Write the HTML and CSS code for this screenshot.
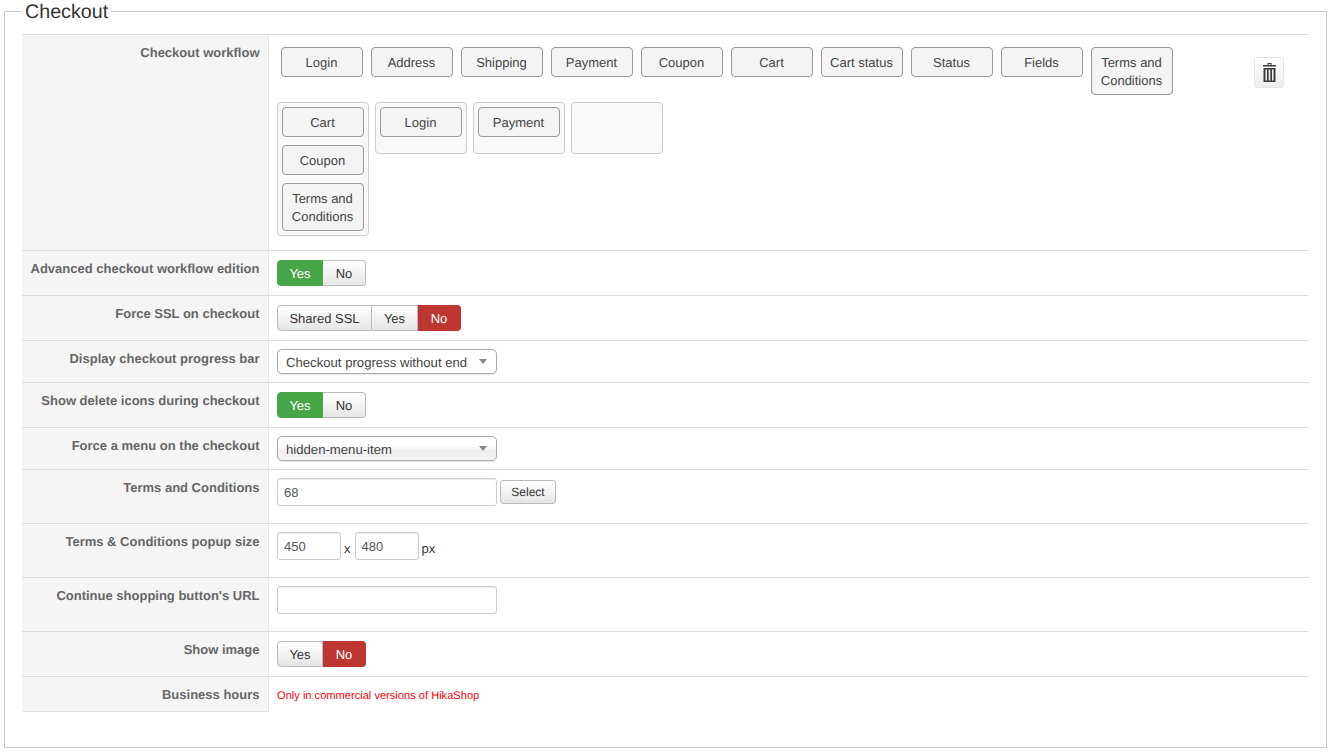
FILE: index.html
```html
<!DOCTYPE html>
<html lang="en">
<head>
<meta charset="utf-8">
<title>Checkout</title>
<link rel="stylesheet" href="styles.css">
</head>
<body>
<fieldset class="panel">
  <legend class="panel-title">Checkout</legend>
  <div class="form">
    <div class="row">
      <div class="label">Checkout workflow</div>
      <div class="cell">
        <div class="palette">
          <div class="chip">Login</div>
          <div class="chip">Address</div>
          <div class="chip">Shipping</div>
          <div class="chip">Payment</div>
          <div class="chip">Coupon</div>
          <div class="chip">Cart</div>
          <div class="chip">Cart status</div>
          <div class="chip">Status</div>
          <div class="chip">Fields</div>
          <div class="chip">Terms and Conditions</div>
          <div class="trash">
            <svg width="13" height="19" viewBox="0 0 13 19" aria-hidden="true">
              <path fill="#3c3c3c" fill-rule="evenodd" d="M4.500 0h4v2h4.500v1.500h-13v-1.500h4.500zM5.500 1v1h2v-1z"/>
              <path fill="#3c3c3c" fill-rule="evenodd" d="M.5 5h12v14h-12zM2.500 6.500v11h1.500v-11zM5.700 6.500v11h1.600v-11zM9 6.500v11h1.500v-11z"/>
            </svg>
          </div>
        </div>
        <div class="zones">
          <div class="zone">
            <div class="chip">Cart</div>
            <div class="chip">Coupon</div>
            <div class="chip">Terms and Conditions</div>
          </div>
          <div class="zone"><div class="chip">Login</div></div>
          <div class="zone"><div class="chip">Payment</div></div>
          <div class="zone"></div>
        </div>
      </div>
    </div>

    <div class="row">
      <div class="label">Advanced checkout workflow edition</div>
      <div class="cell">
        <div class="toggle">
          <span class="opt opt-yes on-green">Yes</span><span class="opt opt-no">No</span>
        </div>
      </div>
    </div>

    <div class="row">
      <div class="label">Force SSL on checkout</div>
      <div class="cell">
        <div class="toggle">
          <span class="opt opt-shared">Shared SSL</span><span class="opt opt-yes">Yes</span><span class="opt opt-no on-red">No</span>
        </div>
      </div>
    </div>

    <div class="row">
      <div class="label">Display checkout progress bar</div>
      <div class="cell">
        <div class="select"><span>Checkout progress without end</span><i class="arrow"></i></div>
      </div>
    </div>

    <div class="row">
      <div class="label">Show delete icons during checkout</div>
      <div class="cell">
        <div class="toggle">
          <span class="opt opt-yes on-green">Yes</span><span class="opt opt-no">No</span>
        </div>
      </div>
    </div>

    <div class="row">
      <div class="label">Force a menu on the checkout</div>
      <div class="cell">
        <div class="select select-shaded"><span>hidden-menu-item</span><i class="arrow"></i></div>
      </div>
    </div>

    <div class="row">
      <div class="label">Terms and Conditions</div>
      <div class="cell">
        <div class="inline">
          <input class="input input-wide" type="text" value="68">
          <span class="btn-select">Select</span>
        </div>
      </div>
    </div>

    <div class="row">
      <div class="label">Terms &amp; Conditions popup size</div>
      <div class="cell">
        <div class="inline">
          <input class="input input-small" type="text" value="450">
          <span class="unit">x</span>
          <input class="input input-small" type="text" value="480">
          <span class="unit">px</span>
        </div>
      </div>
    </div>

    <div class="row">
      <div class="label">Continue shopping button's URL</div>
      <div class="cell">
        <div class="inline">
          <input class="input input-wide" type="text" value="">
        </div>
      </div>
    </div>

    <div class="row">
      <div class="label">Show image</div>
      <div class="cell">
        <div class="toggle">
          <span class="opt opt-yes">Yes</span><span class="opt opt-no on-red">No</span>
        </div>
      </div>
    </div>

    <div class="row row-last">
      <div class="label">Business hours</div>
      <div class="cell"><span class="notice">Only in commercial versions of HikaShop</span></div>
    </div>
  </div>
</fieldset>
</body>
</html>
```

FILE: styles.css
```css
* { box-sizing: border-box; }

body {
  margin: 0 9px 0 4px;
  background: #fff;
  font-family: "Liberation Sans", Arial, sans-serif;
  font-size: 13px;
  line-height: 18px;
  color: #333;
  text-rendering: geometricPrecision;
}

.panel {
  margin: 0;
  min-width: 0;
  border: 1px solid #ccc;
  padding: 12px 17px 35px;
}

.panel-title {
  padding: 2px 3px 0;
  font-size: 19.7px;
  line-height: 20px;
  color: #333;
}

.row {
  display: grid;
  grid-template-columns: 246px 1fr;
  border-top: 1px solid #ddd;
}

.label {
  padding: 9px 8.500px 7px 0;
  background: #f5f5f5;
  text-align: right;
  font-weight: bold;
  color: #666;
}

.row-last .label { border-bottom: 1px solid #e5e5e5; }

.cell {
  border-left: 1px solid #e5e5e5;
  padding: 8px;
}

/* workflow */
.palette {
  display: flex;
  align-items: flex-start;
  gap: 8px;
  margin: 4px 0 7px 4px;
}

.chip {
  width: 82px;
  flex: none;
  padding: 6px 5px 4px 4px;
  border: 1px solid #999;
  border-radius: 4px;
  background: #f4f4f4;
  text-align: center;
  color: #444;
}

.trash {
  display: flex;
  align-items: center;
  justify-content: center;
  width: 30px;
  height: 31px;
  margin: 10px 0 0 73px;
  border: 1px solid #e6e6e6;
  border-radius: 3px;
  background: linear-gradient(#fff, #ececec);
}

.zones {
  display: flex;
  align-items: flex-start;
  gap: 6px;
  margin-bottom: 6px;
}

.zone {
  display: flex;
  flex-direction: column;
  gap: 8px;
  width: 92px;
  min-height: 52px;
  padding: 4px;
  border: 1px solid #ccc;
  border-radius: 4px;
  background: #f9f9f9;
}

/* toggles */
.toggle {
  display: flex;
  margin: 1px 0;
}

.opt {
  height: 26px;
  border: 1px solid #bbb;
  border-left-width: 0;
  background: linear-gradient(#fff, #e6e6e6);
  text-align: center;
  line-height: 26px;
  color: #333;
}

.opt:first-child {
  border-left-width: 1px;
  border-radius: 4px 0 0 4px;
}

.opt:last-child { border-radius: 0 4px 4px 0; }

.opt-shared { width: 95px; }
.opt-yes { width: 46px; }
.opt-no { width: 43px; }

.on-green {
  border-color: #46a546;
  background: #46a546;
  color: #fff;
}

.on-red {
  border-color: #bd362f;
  background: #bd362f;
  color: #fff;
}

/* select */
.select {
  display: flex;
  align-items: center;
  justify-content: space-between;
  width: 220px;
  height: 25px;
  padding: 2px 8px 0;
  border: 1px solid #aaa;
  border-radius: 5px;
  background: #fff;
  box-shadow: 0 1px 1px rgba(0, 0, 0, .1);
  font-size: 13.150px;
  color: #444;
}

.select-shaded { background: linear-gradient(#fff 40%, #eee 60%, #f6f6f6); }

.arrow {
  width: 0;
  height: 0;
  margin: -2px 1px 0 0;
  border-style: solid;
  border-width: 5px 4px 0;
  border-color: #888 transparent transparent;
}

/* inputs */
.inline {
  display: flex;
  align-items: flex-start;
  margin-bottom: 9px;
}

.input {
  height: 28px;
  margin: 0;
  padding: 4px 6px;
  border: 1px solid #ccc;
  border-radius: 3px;
  background: #fff;
  box-shadow: inset 0 1px 1px rgba(0, 0, 0, .075);
  font: inherit;
  color: #555;
}

.input-wide { width: 220px; }
.input-small { width: 64px; }

.unit {
  margin: 8px 3px 0;
  line-height: 18px;
  color: #333;
}

.unit:nth-child(2) { margin-right: 4px; }

.btn-select {
  width: 56px;
  height: 24px;
  margin: 2px 0 0 3px;
  border: 1px solid #bbb;
  border-radius: 3px;
  background: linear-gradient(#fff, #e6e6e6);
  text-align: center;
  font-size: 12px;
  line-height: 23px;
  color: #333;
}

.notice {
  position: relative;
  top: 1px;
  font-size: 11.100px;
  color: #f00;
}
```
